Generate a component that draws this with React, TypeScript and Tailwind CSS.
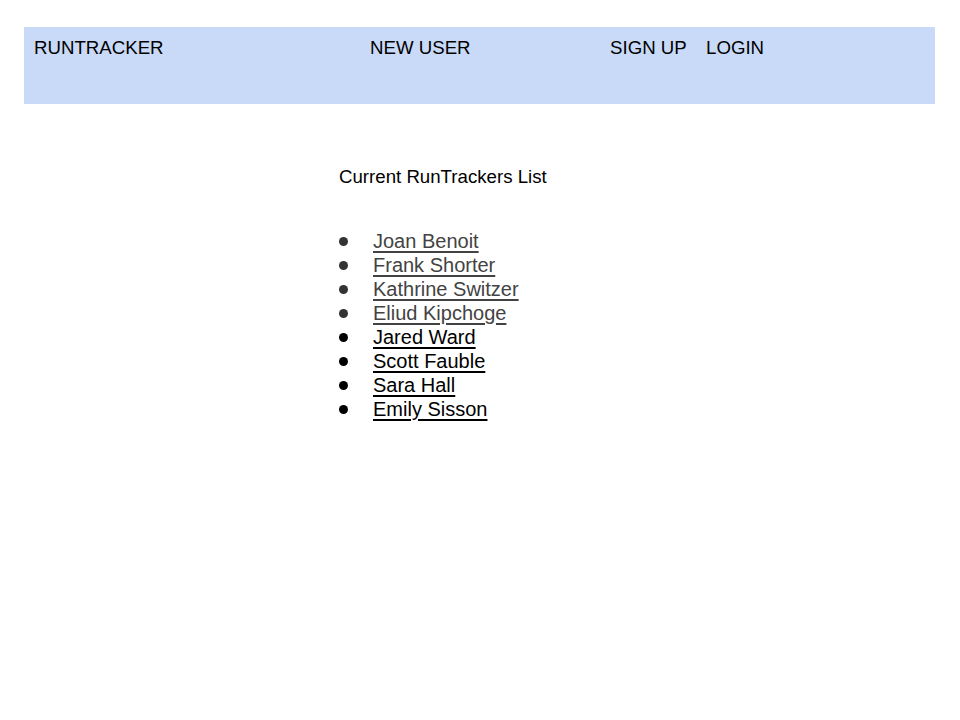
const runners = [
  { name: 'Joan Benoit', muted: true },
  { name: 'Frank Shorter', muted: true },
  { name: 'Kathrine Switzer', muted: true },
  { name: 'Eliud Kipchoge', muted: true },
  { name: 'Jared Ward', muted: false },
  { name: 'Scott Fauble', muted: false },
  { name: 'Sara Hall', muted: false },
  { name: 'Emily Sisson', muted: false },
]

export default function App() {
  return (
    <div className="min-h-[720px] w-[960px] bg-white px-[24px] pt-[27px] font-['Liberation_Sans',Arial,sans-serif] text-black">
      <header className="flex h-[77px] w-[911px] items-start bg-[#c9daf8] pl-[10px] pt-[10px] text-[18.67px] leading-[21px]">
        <span className="w-[336px]">RUNTRACKER</span>
        <span className="w-[240px]">NEW USER</span>
        <span className="w-[96px]">SIGN UP</span>
        <span>LOGIN</span>
      </header>

      <main className="pl-[315px] pt-[62px]">
        <h1 className="text-[18.67px] leading-[21px] font-normal">Current RunTrackers List</h1>
        <ul className="mt-[42px] flex flex-col text-[20px] leading-[24px]">
          {runners.map((r) => (
            <li key={r.name} className={`flex items-center ${r.muted ? 'text-[#434343]' : 'text-black'}`}>
              <span className="flex w-[34px] items-center">
                <span className={`size-[9px] rounded-full ${r.muted ? 'bg-[#333333]' : 'bg-black'}`} />
              </span>
              <a href="#" className="underline underline-offset-[3px] decoration-[1.5px]">
                {r.name}
              </a>
            </li>
          ))}
        </ul>
      </main>
    </div>
  )
}
